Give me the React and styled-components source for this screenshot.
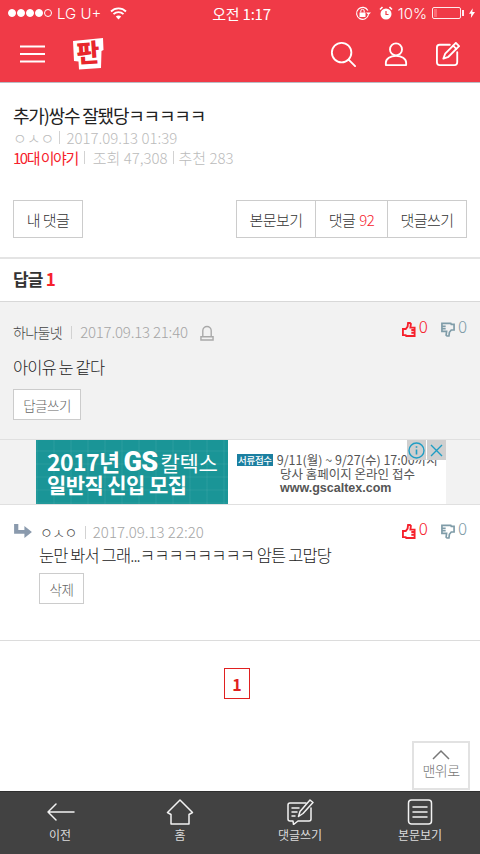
import React from "react";
import styled, { createGlobalStyle } from "styled-components";

const KR = `"Noto Sans CJK KR", "Noto Sans", sans-serif`;

const GlobalStyle = createGlobalStyle`
  html, body {
    margin: 0;
    padding: 0;
    background: #fff;
    font-family: ${KR};
  }
  * { box-sizing: border-box; }
`;

const Page = styled.div`
  position: relative;
  width: 480px;
  height: 854px;
  overflow: hidden;
  display: flex;
  flex-direction: column;
`;

const Top = styled.header`
  height: 83px;
  flex: none;
  background: #f03a47;
  border-bottom: 1px solid #b9bcc4;
  color: #fff;
`;

const StatusBar = styled.div`
  height: 26px;
  padding: 0 5px 0 8px;
  display: grid;
  grid-template-columns: 1fr auto 1fr;
  align-items: center;
  font-size: 15px;
  font-weight: 300;
`;

const StatusSide = styled.div`
  display: flex;
  align-items: center;
  justify-content: ${({ $end }) => ($end ? "flex-end" : "flex-start")};
  gap: 5px;
`;

const Dots = styled.div`
  display: flex;
  gap: 1px;
`;

const Dot = styled.i`
  width: 8px;
  height: 8px;
  border-radius: 50%;
  border: 1px solid #fff;
  background: ${({ $off }) => ($off ? "transparent" : "#fff")};
`;

const Carrier = styled.span`
  font-family: Inter, sans-serif;
  font-weight: 300;
  font-size: 15px;
  margin-right: 4px;
`;

const Clock = styled.span`
  font-weight: 400;
  font-size: 15px;
  letter-spacing: -0.2px;
`;

const Percent = styled.span`
  font-family: Inter, sans-serif;
  font-size: 15px;
  font-weight: 300;
`;

const Battery = styled.div`
  position: relative;
  width: 29px;
  height: 12px;
  border: 1px solid #fff;
  border-radius: 2px;
  padding: 1px;
  opacity: 0.9;
  &::before {
    content: "";
    display: block;
    width: 3px;
    height: 100%;
    background: #ff6f78;
  }
  &::after {
    content: "";
    position: absolute;
    right: -4px;
    top: 2px;
    width: 2px;
    height: 6px;
    background: #fff;
  }
`;

const AlarmIcon = styled.svg`
  margin-left: 3px;
`;

const BoltIcon = styled.svg`
  margin-left: 3px;
`;

const NavBar = styled.nav`
  height: 56px;
  padding: 0 20px;
  display: flex;
  align-items: center;
`;

const Logo = styled.svg`
  width: 34px;
  height: 33px;
  margin: -2px 0 0 27px;
  overflow: visible;
`;

const NavIcons = styled.div`
  margin-left: auto;
  display: flex;
  align-items: center;
  gap: 28px;
`;

const Article = styled.section`
  padding: 20px 13px 0;
  height: 176px;
  border-bottom: 2px solid #e4e4e4;
  flex: none;
`;

const Title = styled.h1`
  margin: 0;
  font-size: 18px;
  line-height: 24px;
  font-weight: 400;
  letter-spacing: -1.2px;
  color: #222;
`;

const Meta = styled.div`
  height: 20px;
  display: flex;
  align-items: center;
  font-size: 15px;
  font-weight: 300;
  color: #bbb;
`;

const Sep = styled.span`
  display: inline-block;
  flex: none;
  align-self: center;
  width: 1px;
  height: 13px;
  background: #d2d2d2;
  margin: 0 ${({ $r }) => $r || 6}px 0 ${({ $l }) => $l || 5}px;
`;

const Red = styled.span`
  color: #f6212c;
`;

const Board = styled.span`
  color: #f6212c;
  font-weight: 400;
  letter-spacing: -1.5px;
`;

const Actions = styled.div`
  margin-top: 33px;
  display: flex;
  justify-content: space-between;
`;

const BoxButton = styled.div`
  height: 38px;
  width: ${({ $w }) => $w}px;
  display: flex;
  align-items: center;
  justify-content: center;
  gap: 4px;
  border: 1px solid #ccc;
  margin-left: ${({ $join }) => ($join ? "-1px" : 0)};
  font-size: 15px;
  font-weight: 300;
  letter-spacing: -0.6px;
  color: #333;
`;

const ButtonGroup = styled.div`
  display: flex;
`;

const RepliesHead = styled.h2`
  margin: 0;
  height: 43px;
  flex: none;
  padding: 0 13px 4px;
  display: flex;
  align-items: center;
  gap: 3px;
  font-size: 17px;
  font-weight: 700;
  letter-spacing: -0.8px;
  color: #333;
  border-bottom: 1px solid #d8d8d8;
`;

const Comment = styled.article`
  flex: none;
  height: ${({ $h }) => $h}px;
  padding: ${({ $child }) => ($child ? "16px 13px 0 13px" : "19px 13px 0")};
  background: ${({ $child }) => ($child ? "#fff" : "#f2f2f2")};
`;

const CommentHead = styled.div`
  display: flex;
  align-items: flex-start;
`;

const Author = styled.span`
  font-size: 14px;
  line-height: 22px;
  font-weight: 300;
  letter-spacing: -0.6px;
  color: #444;
`;

const DateText = styled.span`
  font-size: 15px;
  line-height: 22px;
  font-weight: 300;
  letter-spacing: ${({ $tight }) => ($tight ? "-0.2px" : 0)};
  color: #a5a5a5;
`;

const BellIcon = styled.svg`
  width: 14px;
  height: 17px;
  margin: 3px 0 0 12px;
`;

const ReplyIcon = styled.svg`
  width: 20px;
  height: 15px;
  margin: 3px 7px 0 0;
`;

const Votes = styled.div`
  margin: ${({ $child }) => ($child ? "-3px" : "-5px")} 0 0 auto;
  display: flex;
  gap: 13px;
`;

const Vote = styled.span`
  display: flex;
  align-items: flex-start;
  gap: 3px;
  font-size: 17px;
  line-height: 20px;
  font-weight: 300;
  color: ${({ $down }) => ($down ? "#7f9ca8" : "#f6212c")};
`;

const Thumb = styled.svg`
  width: 14px;
  height: 15px;
  margin-top: 6px;
`;

const CommentBody = styled.div`
  padding-left: ${({ $child }) => ($child ? "26px" : 0)};
`;

const CommentText = styled.p`
  margin: ${({ $child }) => ($child ? "0 0 5px" : "12px 0 9px")};
  font-size: 16.5px;
  line-height: 25px;
  font-weight: 300;
  letter-spacing: -0.9px;
  color: #222;
`;

const SmallButton = styled.div`
  width: ${({ $w }) => $w}px;
  height: 31px;
  display: flex;
  align-items: center;
  justify-content: center;
  background: #fff;
  border: 1px solid #ccc;
  font-size: 13.5px;
  font-weight: 300;
  letter-spacing: -0.5px;
  color: #666;
`;

const AdRow = styled.aside`
  flex: none;
  height: 66px;
  display: flex;
  justify-content: center;
  background: #f2f2f2;
  border-top: 1px solid #e0e0e0;
  border-bottom: 1px solid #e0e0e0;
`;

const Ad = styled.div`
  position: relative;
  width: 410px;
  margin-left: 2px;
  display: flex;
  background: #fff;
`;

const AdLeft = styled.div`
  width: 192px;
  flex: none;
  background-color: #1a9597;
  background-image: repeating-linear-gradient(90deg, rgba(255, 255, 255, 0.035) 0 2px, transparent 2px 17px),
    repeating-linear-gradient(0deg, rgba(255, 255, 255, 0.03) 0 2px, transparent 2px 13px);
  color: #fff;
  padding: 10px 0 0 11px;
  font-weight: 700;
  white-space: nowrap;
`;

const AdHeadline = styled.div`
  height: 23px;
  line-height: 23px;
  font-size: ${({ $size }) => $size}px;
  letter-spacing: -0.6px;
`;

const AdBrand = styled.span`
  font-family: Roboto, sans-serif;
  font-weight: 900;
  font-size: 27px;
  line-height: 0;
  margin: 0 3px 0 4px;
`;

const AdThin = styled.span`
  font-weight: 400;
  font-size: 21px;
  line-height: 0;
  letter-spacing: -0.4px;
`;

const AdRight = styled.div`
  flex: 1;
  padding: 13px 0 0 9px;
  color: #555;
  font-size: 12.5px;
  line-height: 14px;
  font-weight: 500;
  white-space: nowrap;
  overflow: hidden;
`;

const AdLine = styled.div`
  height: 14px;
  padding-left: ${({ $in }) => ($in ? "43px" : 0)};
  display: flex;
  align-items: center;
  gap: 4px;
  font-family: ${({ $latin }) => ($latin ? `"Liberation Sans", sans-serif` : KR)};
  font-weight: ${({ $latin }) => ($latin ? 700 : 400)};
`;

const AdTag = styled.span`
  background: #1b7fa0;
  color: #fff;
  font-size: 9.5px;
  line-height: 12px;
  padding: 0 1px;
  font-weight: 500;
  letter-spacing: -0.3px;
`;

const AdControls = styled.div`
  position: absolute;
  top: 0;
  right: 0;
  display: flex;
  gap: 1px;
`;

const AdControl = styled.div`
  width: 19px;
  height: 20px;
  background: #cfcfcf;
  display: flex;
  align-items: center;
  justify-content: center;
`;

const Pagination = styled.div`
  flex: none;
  border-top: 1px solid #dcdcdc;
  padding: 27px 6px 0 0;
  display: flex;
  justify-content: center;
`;

const PageNumber = styled.div`
  width: 26px;
  height: 31px;
  border: 1px solid #e02020;
  color: #e02020;
  font-size: 16px;
  font-weight: 700;
  display: flex;
  align-items: center;
  justify-content: center;
`;

const ToTop = styled.div`
  position: absolute;
  left: 412px;
  top: 741px;
  width: 58px;
  height: 49px;
  background: #fff;
  border: 2px solid #e2e2e2;
  display: flex;
  flex-direction: column;
  align-items: center;
  padding-top: 6px;
  font-size: 14px;
  line-height: 18px;
  font-weight: 300;
  letter-spacing: -0.6px;
  color: #777;
`;

const ToTopArrow = styled.svg`
  width: 18px;
  height: 11px;
  margin-bottom: 1px;
`;

const BottomBar = styled.footer`
  margin-top: auto;
  flex: none;
  height: 63px;
  background: #424242;
  border-top: 1px solid #2f2f2f;
  display: grid;
  grid-template-columns: 120px 120px 120px 120px;
`;

const BottomItem = styled.div`
  display: flex;
  flex-direction: column;
  align-items: center;
  padding-top: 7px;
  color: #dcdcdc;
  font-size: 12px;
  line-height: 16px;
  font-weight: 400;
`;

const BottomIcon = styled.svg`
  width: 30px;
  height: 26px;
  margin-bottom: 2px;
`;

const White = { fill: "none", stroke: "#fff", strokeWidth: 2, strokeLinecap: "round", strokeLinejoin: "round" };
const Thin = { fill: "none", stroke: "#f2f2f2", strokeWidth: 1.5, strokeLinecap: "round", strokeLinejoin: "round" };

const ThumbUp = () => (
  <Thumb viewBox="0 0 15 16">
    <path
      d="M1 7.500h3l2-2.500 .5-4h2l1 1-.5 4h4.500v9H4.500l-.5-1H1z M10 8.500h3.500 M10 11.500h3.500"
      fill="none"
      stroke="#f6212c"
      strokeWidth="2"
    />
  </Thumb>
);

const ThumbDown = () => (
  <Thumb viewBox="0 0 15 16">
    <path
      d="M14 8.500h-3l-2 2.500-.5 4h-2l-1-1 .5-4H1V1.500h9.500l.5 1h3z M5 7H1.500 M5 4.500H1.500"
      fill="none"
      stroke="#7f9ca8"
      strokeWidth="1.800"
    />
  </Thumb>
);

const VoteBox = ({ child }) => (
  <Votes $child={child}>
    <Vote>
      <ThumbUp />0
    </Vote>
    <Vote $down>
      <ThumbDown />0
    </Vote>
  </Votes>
);

const App = () => (
  <Page>
    <GlobalStyle />
    <Top>
      <StatusBar>
        <StatusSide>
          <Dots>
            <Dot />
            <Dot />
            <Dot />
            <Dot />
            <Dot $off />
          </Dots>
          <Carrier>LG U+</Carrier>
          <svg width="17" height="13" viewBox="0 0 17 13">
            <path d="M1 4.500a10.500 10.500 0 0 1 15 0" fill="none" stroke="#fff" strokeWidth="1.800" />
            <path d="M3.500 7.200a7 7 0 0 1 10 0" fill="none" stroke="#fff" strokeWidth="1.800" />
            <path d="M5.800 9.600a3.600 3.600 0 0 1 5.400 0L8.500 12.500z" fill="#fff" />
          </svg>
        </StatusSide>
        <Clock>오전 1:17</Clock>
        <StatusSide $end>
          <svg width="16" height="15" viewBox="0 0 16 15">
            <path d="M13.500 8.500a6 6 0 1 1-.6-4" fill="none" stroke="#fff" strokeWidth="1.200" />
            <path d="M11 6.500l2.500 2.500 2.500-2.500z" fill="#fff" />
            <rect x="4.500" y="6.500" width="6" height="4.500" fill="#fff" />
            <path d="M5.800 6.500V5a1.700 1.700 0 0 1 3.400 0v1.500" fill="none" stroke="#fff" />
          </svg>
          <AlarmIcon width="14" height="14" viewBox="0 0 14 14">
            <circle cx="7" cy="8" r="5.500" fill="#fff" />
            <path d="M7 5v3.500h2.500" fill="none" stroke="#f03a47" strokeWidth="1.200" />
            <path d="M1 3.500L3.500 1M13 3.500L10.500 1" stroke="#fff" strokeWidth="1.600" />
          </AlarmIcon>
          <Percent>10%</Percent>
          <Battery />
          <BoltIcon width="6" height="12" viewBox="0 0 8 13">
            <path d="M5 0L0 7.500h3L2.500 13 8 5H4.500z" fill="#fff" />
          </BoltIcon>
        </StatusSide>
      </StatusBar>
      <NavBar>
        <svg width="25" height="18" viewBox="0 0 25 18">
          <path d="M0 1.500h25M0 9h25M0 16.500h25" stroke="#fff" strokeWidth="2" />
        </svg>
        <Logo viewBox="0 0 34 33">
          <path d="M1 4L31 1l.5 12-2 1-.5 17-22 1.500-.5-8L2 24z" fill="#fff" />
          <text x="16" y="25" textAnchor="middle" fontSize="25" fontWeight="900" fill="#e8262c" fontFamily={KR} transform="rotate(-4 16 16)">
            판
          </text>
        </Logo>
        <NavIcons>
          <svg width="26" height="26" viewBox="0 0 28 28" {...White}>
            <circle cx="12.500" cy="12.500" r="10.500" />
            <path d="M20 20l7 7" />
          </svg>
          <svg width="24" height="24" viewBox="0 0 26 26" {...White}>
            <circle cx="13" cy="8" r="6.500" />
            <path d="M2 25v-2.500C2 18 7 15 13 15s11 3 11 7.500V25z" />
          </svg>
          <svg width="24" height="24" viewBox="0 0 26 26" {...White}>
            <path d="M15 3H4a3 3 0 0 0-3 3v16a3 3 0 0 0 3 3h16a3 3 0 0 0 3-3V11" />
            <path d="M21.500 1l3.500 3.500L13.500 16 8 18l2-5.500z" />
            <path d="M18.500 4l3.500 3.500" />
          </svg>
        </NavIcons>
      </NavBar>
    </Top>

    <Article>
      <Title>추가)쌍수 잘됐당ㅋㅋㅋㅋㅋ</Title>
      <Meta>
        ㅇㅅㅇ
        <Sep />
        2017.09.13 01:39
      </Meta>
      <Meta>
        <Board>10대 이야기</Board>
        <Sep $l={6} $r={8} />
        조회 47,308
        <Sep $l={5} $r={5} />
        추천 283
      </Meta>
      <Actions>
        <BoxButton $w={70}>내 댓글</BoxButton>
        <ButtonGroup>
          <BoxButton $w={80}>본문보기</BoxButton>
          <BoxButton $w={73} $join>
            댓글 <Red>92</Red>
          </BoxButton>
          <BoxButton $w={80} $join>
            댓글쓰기
          </BoxButton>
        </ButtonGroup>
      </Actions>
    </Article>

    <RepliesHead>
      답글<Red>1</Red>
    </RepliesHead>

    <Comment $h={137}>
      <CommentHead>
        <Author>하나둘넷</Author>
        <Sep $l={9} $r={8} />
        <DateText $tight>2017.09.13 21:40</DateText>
        <BellIcon viewBox="0 0 15 18">
          <path d="M3 13V7a4.500 4.500 0 0 1 9 0v6M1 13.500h13v3.500H1z" fill="none" stroke="#a9a9a9" strokeWidth="1.500" />
        </BellIcon>
        <VoteBox />
      </CommentHead>
      <CommentBody>
        <CommentText>아이유 눈 같다</CommentText>
        <SmallButton $w={68}>답글쓰기</SmallButton>
      </CommentBody>
    </Comment>

    <AdRow>
      <Ad>
        <AdLeft>
          <AdHeadline $size={23}>
            2017년<AdBrand>GS</AdBrand>
            <AdThin>칼텍스</AdThin>
          </AdHeadline>
          <AdHeadline $size={21}>일반직 신입 모집</AdHeadline>
        </AdLeft>
        <AdRight>
          <AdLine>
            <AdTag>서류접수</AdTag> 9/11(월) ~ 9/27(수) 17:00까지
          </AdLine>
          <AdLine $in>당사 홈페이지 온라인 접수</AdLine>
          <AdLine $in $latin>
            www.gscaltex.com
          </AdLine>
        </AdRight>
        <AdControls>
          <AdControl>
            <svg width="17" height="17" viewBox="0 0 17 17">
              <circle cx="8.500" cy="8.500" r="7.500" fill="none" stroke="#1f9dc4" strokeWidth="1.400" />
              <path d="M8.500 7.500v5M8.500 4.200v1.600" stroke="#1f9dc4" strokeWidth="1.600" />
            </svg>
          </AdControl>
          <AdControl>
            <svg width="13" height="13" viewBox="0 0 13 13">
              <path d="M1 1l11 11M12 1L1 12" stroke="#1f9dc4" strokeWidth="1.400" />
            </svg>
          </AdControl>
        </AdControls>
      </Ad>
    </AdRow>

    <Comment $child $h={135}>
      <CommentHead>
        <ReplyIcon viewBox="0 0 21 16">
          <path d="M1 0h4.500v6.500H12V2l8 6.500-8 6.500v-4.500H1z" fill="#8a9aad" />
        </ReplyIcon>
        <Author>ㅇㅅㅇ</Author>
        <Sep $l={8} $r={7} />
        <DateText>2017.09.13 22:20</DateText>
        <VoteBox child />
      </CommentHead>
      <CommentBody $child>
        <CommentText $child>눈만 봐서 그래...ㅋㅋㅋㅋㅋㅋㅋㅋ 암튼 고맙당</CommentText>
        <SmallButton $w={45}>삭제</SmallButton>
      </CommentBody>
    </Comment>

    <Pagination>
      <PageNumber>1</PageNumber>
    </Pagination>

    <ToTop>
      <ToTopArrow viewBox="0 0 18 11">
        <path d="M1 10l8-8 8 8" fill="none" stroke="#777" strokeWidth="1.500" />
      </ToTopArrow>
      맨위로
    </ToTop>

    <BottomBar>
      <BottomItem>
        <BottomIcon viewBox="0 0 30 26" {...Thin}>
          <path d="M29 13H3M11 5l-8 8 8 8" />
        </BottomIcon>
        이전
      </BottomItem>
      <BottomItem>
        <BottomIcon viewBox="0 0 30 26" {...Thin}>
          <path d="M15 1L2.500 13.500 6 15.500V25h18v-9.500l3.500-2z" />
        </BottomIcon>
        홈
      </BottomItem>
      <BottomItem>
        <BottomIcon viewBox="0 0 30 26" {...Thin}>
          <path d="M21 4H5a2 2 0 0 0-2 2v14a2 2 0 0 0 2 2h3l.5 3.500L13 22h11a2 2 0 0 0 2-2V9" />
          <path d="M7 9h7M7 13h5M7 17h3" />
          <path d="M25 1l3 2.500-10 11-4.500 3 1.500-5z" />
        </BottomIcon>
        댓글쓰기
      </BottomItem>
      <BottomItem>
        <BottomIcon viewBox="0 0 30 26" {...Thin}>
          <rect x="3.500" y="1" width="23" height="24" rx="3" />
          <path d="M8 8h14M8 13h14M8 18h14" />
        </BottomIcon>
        본문보기
      </BottomItem>
    </BottomBar>
  </Page>
);

export default App;
